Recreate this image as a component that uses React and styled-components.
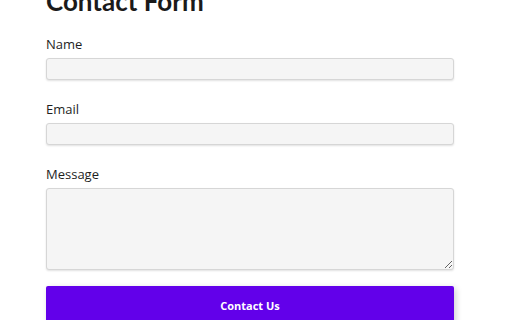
import React from "react";
import styled, { createGlobalStyle } from "styled-components";

const GlobalStyle = createGlobalStyle`
  body {
    margin: 0;
    background: #fff;
    font-family: "Open Sans", "Noto Sans", sans-serif;
    color: #222;
    overflow: hidden;
  }
`;

const Page = styled.div`
  width: 408px;
  padding-left: 46px;
`;

const Title = styled.h1`
  margin: -16px 0 17px;
  font-family: Lato, "Open Sans", sans-serif;
  font-size: 26px;
  line-height: 34px;
  font-weight: 700;
  color: #1a1a1a;
  white-space: nowrap;
`;

const Form = styled.form`
  display: flex;
  flex-direction: column;
`;

const Field = styled.div`
  display: flex;
  flex-direction: column;
  gap: 5px;
  margin-bottom: ${(p) => (p.last ? "16px" : "20px")};
`;

const Label = styled.label`
  font-size: 13px;
  line-height: 18px;
  color: #1e1e1e;
`;

const Input = styled.input`
  box-sizing: border-box;
  width: 100%;
  height: 22px;
  margin: 0;
  border: 1px solid #d6d6d6;
  border-radius: 3px;
  background: #f5f5f5;
  box-shadow: 0 1px 2px rgba(0, 0, 0, 0.12);
  outline: none;
`;

const TextArea = styled.textarea`
  box-sizing: border-box;
  width: 100%;
  height: 82px;
  margin: 0;
  border: 1px solid #d6d6d6;
  border-radius: 3px;
  background: #f5f5f5;
  box-shadow: 0 1px 2px rgba(0, 0, 0, 0.12);
  outline: none;
  resize: vertical;
  display: block;
`;

const Button = styled.button`
  height: 38px;
  width: 100%;
  border: none;
  border-radius: 2px;
  background: #6200ea;
  color: #fff;
  font-family: "Open Sans", "Noto Sans", sans-serif;
  font-size: 11px;
  font-weight: 700;
  box-shadow: 2px 2px 6px rgba(0, 0, 0, 0.18);
  cursor: pointer;
`;

export default function App() {
  return (
    <Page>
      <GlobalStyle />
      <Title>Contact Form</Title>
      <Form onSubmit={(e) => e.preventDefault()}>
        <Field>
          <Label htmlFor="name">Name</Label>
          <Input id="name" type="text" />
        </Field>
        <Field>
          <Label htmlFor="email">Email</Label>
          <Input id="email" type="email" />
        </Field>
        <Field last>
          <Label htmlFor="message">Message</Label>
          <TextArea id="message" />
        </Field>
        <Button type="submit">Contact Us</Button>
      </Form>
    </Page>
  );
}
